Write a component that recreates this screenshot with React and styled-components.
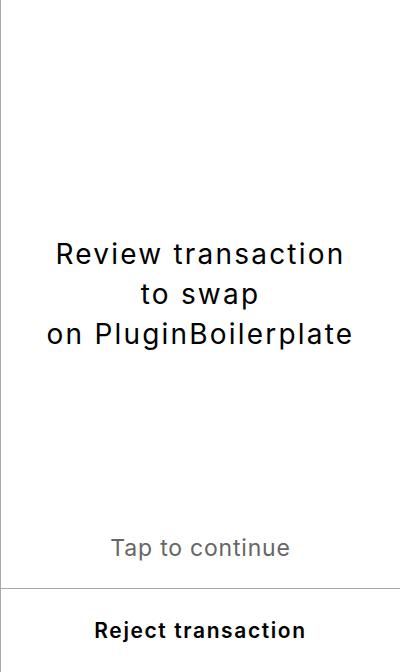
import React from "react";
import styled, { createGlobalStyle } from "styled-components";

const GlobalStyle = createGlobalStyle`
  html, body {
    margin: 0;
    padding: 0;
    background: #fff;
  }
  * {
    box-sizing: border-box;
  }
`;

const Screen = styled.div`
  display: flex;
  flex-direction: column;
  height: 100vh;
  border-left: 1px solid #a8a8a8;
  font-family: Inter, "Noto Sans", sans-serif;
  color: #000;
`;

const Body = styled.div`
  flex: 1;
  display: flex;
  flex-direction: column;
  padding-top: 52px;
  cursor: pointer;
`;

const TitleArea = styled.div`
  flex: 1;
  display: flex;
  align-items: center;
  justify-content: center;
`;

const Title = styled.h1`
  margin: 0;
  font-size: 28px;
  font-weight: 400;
  line-height: 40px;
  letter-spacing: 2.2px;
  text-align: center;
`;

const Hint = styled.p`
  margin: 0;
  padding-bottom: 28px;
  font-size: 23px;
  line-height: 24px;
  letter-spacing: 0.8px;
  color: #666;
  text-align: center;
`;

const RejectButton = styled.button`
  height: 84px;
  border: none;
  border-top: 1px solid #a8a8a8;
  background: none;
  font-family: inherit;
  font-size: 21px;
  font-weight: 600;
  letter-spacing: 1.6px;
  color: #000;
  cursor: pointer;
`;

export default function App() {
  return (
    <>
      <GlobalStyle />
      <Screen>
        <Body>
          <TitleArea>
            <Title>
              Review transaction
              <br />
              to swap
              <br />
              on PluginBoilerplate
            </Title>
          </TitleArea>
          <Hint>Tap to continue</Hint>
        </Body>
        <RejectButton>Reject transaction</RejectButton>
      </Screen>
    </>
  );
}
